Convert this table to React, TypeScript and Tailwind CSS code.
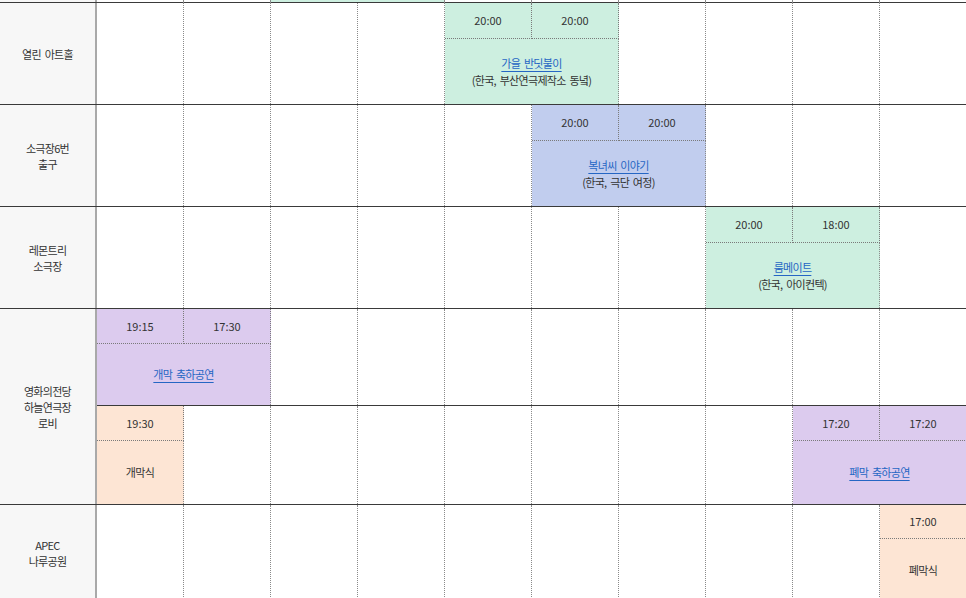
type Shade = 'green' | 'blue' | 'purple' | 'peach';

type Ev = {
  col: number;
  span: 1 | 2;
  shade: Shade;
  times: string[];
  title: string;
  link?: boolean;
  sub?: string;
};

const SHADES: Record<Shade, string> = {
  green: 'bg-[#cdefe0]',
  blue: 'bg-[#c1cdee]',
  purple: 'bg-[#dccbee]',
  peach: 'bg-[#fde5d4]',
};

const DOT = 'border-r border-dotted border-[#8a8a8a]';

function EventCell({ ev, timeH }: { ev: Ev; timeH: string }) {
  return (
    <div className={`flex flex-col shrink-0 ${ev.span === 2 ? 'w-[174px]' : 'w-[87px]'} ${SHADES[ev.shade]}`}>
      <div className={`flex shrink-0 ${timeH}`}>
        {ev.times.map((t, i) => (
          <div
            key={i}
            className="w-[87px] flex items-center justify-center border-r border-b border-dotted border-[#7a7a7a]"
          >
            {t}
          </div>
        ))}
      </div>
      <div className={`flex-1 flex flex-col items-center justify-center text-center leading-[17px] tracking-[-0.7px] [word-spacing:2px] ${DOT}`}>
        {ev.link ? (
          <span className="text-[#2566c4] underline underline-offset-[3px] decoration-[#2566c4]">{ev.title}</span>
        ) : (
          <span>{ev.title}</span>
        )}
        {ev.sub && <span>{ev.sub}</span>}
      </div>
    </div>
  );
}

function SubRow({ events, h, timeH, top }: { events: Ev[]; h: string; timeH: string; top?: boolean }) {
  const cells = [];
  let c = 0;
  while (c < 10) {
    const ev = events.find((e) => e.col === c);
    if (ev) {
      cells.push(<EventCell key={c} ev={ev} timeH={timeH} />);
      c += ev.span;
    } else {
      cells.push(<div key={c} className={`w-[87px] shrink-0 ${DOT}`} />);
      c++;
    }
  }
  return <div className={`flex ${h} ${top ? 'border-t border-[#3a3a3a]' : ''}`}>{cells}</div>;
}

function Venue({ lines }: { lines: string[] }) {
  return (
    <div className="w-[97px] shrink-0 bg-[#f7f7f7] border-r-2 border-[#a9a9a9] flex flex-col items-center justify-center text-center leading-[16px] tracking-[-0.7px] [word-spacing:2px]">
      {lines.map((l) => (
        <span key={l}>{l}</span>
      ))}
    </div>
  );
}

export default function App() {
  return (
    <div className="w-[966px] h-[598px] overflow-hidden bg-white text-[11px] text-[#333] font-['Noto_Sans_CJK_KR',sans-serif]">
      <div className="w-[967px]">
        {/* tail of the row above */}
        <div className="flex h-[2px]">
          <div className="w-[97px] shrink-0 bg-[#f7f7f7] border-r-2 border-[#a9a9a9]" />
          <div className={`w-[87px] ${DOT}`} />
          <div className={`w-[87px] ${DOT}`} />
          <div className={`w-[174px] ${SHADES.green} ${DOT}`} />
          <div className={`w-[87px] ${DOT}`} />
          <div className={`w-[87px] ${DOT}`} />
          <div className={`w-[87px] ${DOT}`} />
          <div className={`w-[87px] ${DOT}`} />
          <div className={`w-[87px] ${DOT}`} />
          <div className={`w-[87px] ${DOT}`} />
        </div>

        <div className="flex h-[102px] border-t border-[#3a3a3a]">
          <Venue lines={['열린 아트홀']} />
          <SubRow
            h="h-[101px]"
            timeH="h-[36px]"
            events={[{ col: 4, span: 2, shade: 'green', times: ['20:00', '20:00'], title: '가을 반딧불이', link: true, sub: '(한국, 부산연극제작소 동녘)' }]}
          />
        </div>

        <div className="flex h-[102px] border-t border-[#3a3a3a]">
          <Venue lines={['소극장6번', '출구']} />
          <SubRow
            h="h-[101px]"
            timeH="h-[36px]"
            events={[{ col: 5, span: 2, shade: 'blue', times: ['20:00', '20:00'], title: '복녀씨 이야기', link: true, sub: '(한국, 극단 여정)' }]}
          />
        </div>

        <div className="flex h-[102px] border-t border-[#3a3a3a]">
          <Venue lines={['레몬트리', '소극장']} />
          <SubRow
            h="h-[101px]"
            timeH="h-[36px]"
            events={[{ col: 7, span: 2, shade: 'green', times: ['20:00', '18:00'], title: '룸메이트', link: true, sub: '(한국, 아이컨텍)' }]}
          />
        </div>

        <div className="flex h-[196px] border-t border-[#3a3a3a]">
          <Venue lines={['영화의전당', '하늘연극장', '로비']} />
          <div className="flex flex-col">
            <SubRow
              h="h-[96px]"
              timeH="h-[35px]"
              events={[{ col: 0, span: 2, shade: 'purple', times: ['19:15', '17:30'], title: '개막 축하공연', link: true }]}
            />
            <SubRow
              top
              h="h-[99px]"
              timeH="h-[35px]"
              events={[
                { col: 0, span: 1, shade: 'peach', times: ['19:30'], title: '개막식' },
                { col: 8, span: 2, shade: 'purple', times: ['17:20', '17:20'], title: '폐막 축하공연', link: true },
              ]}
            />
          </div>
        </div>

        <div className="flex h-[97px] border-t border-[#3a3a3a]">
          <Venue lines={['APEC', '나루공원']} />
          <SubRow
            h="h-[96px]"
            timeH="h-[34px]"
            events={[{ col: 9, span: 1, shade: 'peach', times: ['17:00'], title: '폐막식' }]}
          />
        </div>
      </div>
    </div>
  );
}
